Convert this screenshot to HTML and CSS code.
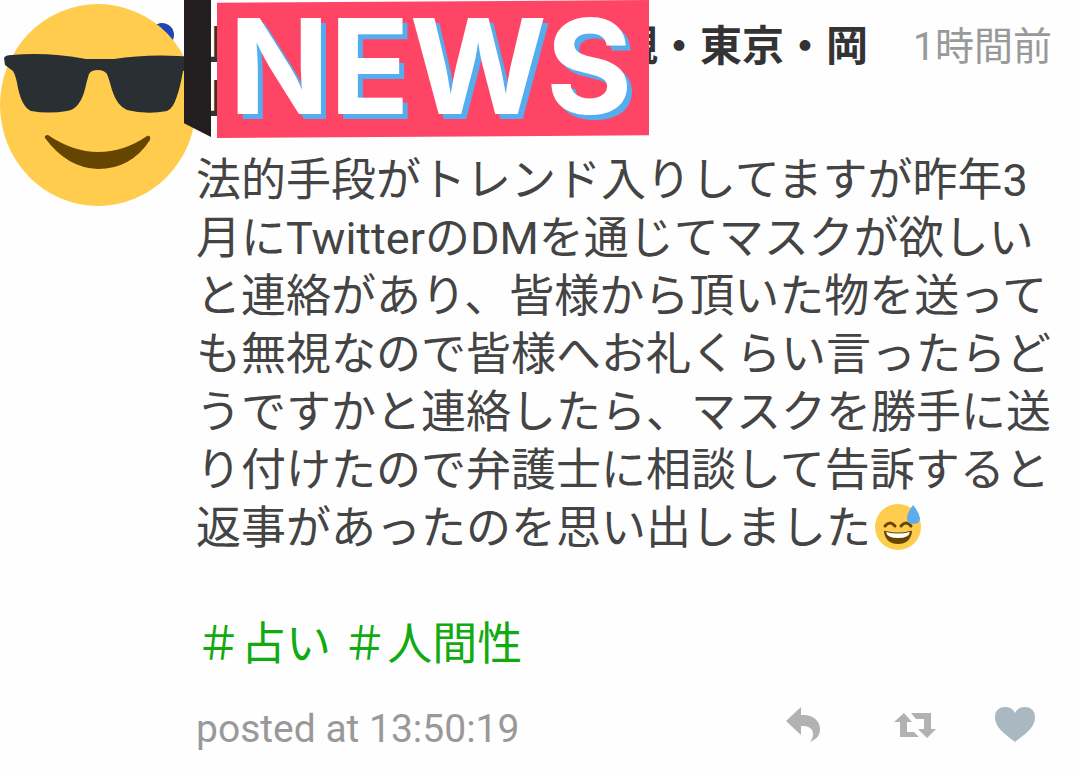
FILE: index.html
```html
<!DOCTYPE html>
<html lang="ja">
<head>
    <meta charset="UTF-8">
    <meta name="viewport" content="width=device-width, initial-scale=1">
    <title>NEWS</title>
    <link rel="stylesheet" href="styles.css">
</head>
<body>
    <article class="post">
        <div class="avatar">
            <svg viewBox="0 0 196 206" aria-hidden="true">
                <circle cx="162" cy="35" r="12" fill="#1f45b5"/>
                <ellipse cx="98" cy="105" rx="98" ry="101" fill="#ffcc4d"/>
                <path d="M4 58Q5 55 12 55Q48 52 86 59H114Q150 53 196 57V67L183 71Q180 88 177 96Q173 109 167 111Q147 115 127 110Q117 106 112 90Q109 79 107 74Q104 70 98 70Q91 70 89 74Q87 80 85 89Q80 109 67 111Q49 114 31 111Q22 107 18 88Q16 76 13 71L5 65Z" fill="#292f33"/>
                <path d="M45 138Q44 135 48 135Q73 152 98 152Q124 152 147 136Q151 135 150 140Q131 169 98 169Q67 168 45 138Z" fill="#664500"/>
            </svg>
        </div>

        <div class="content">
            <header class="post-header">
                <h1 class="name">山<span class="covered"></span>観・東京・岡山</h1>
                <time class="time">1時間前</time>
            </header>

            <p class="text">法的手段がトレンド入りしてますが昨年3月にTwitterのDMを通じてマスクが欲しいと連絡があり、皆様から頂いた物を送っても無視なので皆様へお礼くらい言ったらどうですかと連絡したら、マスクを勝手に送り付けたので弁護士に相談して告訴すると返事があったのを思い出しました<svg class="emoji" viewBox="0 0 46 46" role="img" aria-label="汗">
                <circle cx="23" cy="23" r="23" fill="#ffcc4d"/>
                <path d="M10 22Q15 16 20 22M26 22Q31 16 36 22" fill="none" stroke="#664500" stroke-width="3" stroke-linecap="round"/>
                <path d="M9 28Q9 26 11 27Q23 30 35 27Q37 26 37 28Q35 40 23 40Q11 40 9 28Z" fill="#664500"/>
                <path d="M11 28Q23 31 35 28Q34 34 23 34Q12 34 11 28Z" fill="#fff"/>
                <path d="M38 1Q32 9 32 14Q32 20 38 20Q45 20 45 14Q44 8 38 1Z" fill="#5dadec"/>
            </svg></p>

            <p class="tags"><a href="#uranai">＃占い</a> <a href="#ningensei">＃人間性</a></p>

            <footer class="post-footer">
                <span class="posted">posted at 13:50:19</span>
                <div class="actions">
                    <button class="action" type="button" aria-label="返信">
                        <svg width="52" height="42" viewBox="1 0 52 42">
                            <path d="M3 19L18 5V13C29 12 37 18 37 27C37 33 34 37 27 40C32 34 32 23 18 24V33Z" fill="#b2b2b2"/>
                        </svg>
                    </button>
                    <button class="action" type="button" aria-label="リツイート">
                        <svg width="42" height="42" viewBox="0 0 42 42">
                            <path d="M0 20L10 11L18 20H13V30H20L25 35H6V20ZM17 11H37V27H42L33 36L24 27H30V17H22Z" fill="#b2b2b2"/>
                        </svg>
                    </button>
                    <button class="action" type="button" aria-label="いいね">
                        <svg width="42" height="42" viewBox="0 0 42 42">
                            <path d="M21 40C14 34 1 27 1 15C1 8 6 5 11 5C16 5 19 7 21 11C23 7 26 5 31 5C36 5 41 8 41 15C41 27 28 34 21 40Z" fill="#aab8c2"/>
                        </svg>
                    </button>
                </div>
            </footer>
        </div>

        <div class="ribbon"></div>
        <div class="banner">NEWS</div>
    </article>
</body>
</html>
```
FILE: styles.css
```css
:root {
    --text: #444;
    --name: #333;
    --muted: #999;
    --tag: #11aa11;
    --banner: #ff4565;
    --banner-shadow: #55acee;
}

body {
    margin: 0;
    background: #fefefe;
    color: var(--text);
    font-family: Roboto, "Noto Sans CJK JP", sans-serif;
}

.post {
    position: relative;
    display: flex;
    align-items: flex-start;
}

.avatar {
    flex: 0 0 196px;
}

.avatar svg {
    display: block;
    width: 100%;
}

.content {
    flex: 1;
    min-width: 0;
    padding: 20px 28px 16px 0;
}

.post-header {
    display: flex;
    justify-content: space-between;
    align-items: flex-start;
    gap: 32px;
}

.name {
    margin: 0;
    flex: 1;
    color: var(--name);
    font-size: 42px;
    font-weight: bold;
    line-height: 54px;
}

/* part of the name hidden by the banner */
.covered {
    display: inline-block;
    width: 9em;
}

.time {
    color: var(--muted);
    font-size: 39px;
    line-height: 54px;
    white-space: nowrap;
}

.text {
    margin: 24px 0 0;
    font-size: 45px;
    line-height: 58px;
}

.emoji {
    width: 46px;
    height: 46px;
    margin-left: 4px;
    vertical-align: -6px;
}

.tags {
    margin: 58px 0 0;
    font-size: 45px;
    line-height: 58px;
}

.tags a {
    color: var(--tag);
    text-decoration: none;
}

.post-footer {
    display: flex;
    justify-content: space-between;
    align-items: flex-start;
    margin-top: 28px;
    padding-right: 16px;
}

.posted {
    color: var(--muted);
    font-size: 39px;
    line-height: 54px;
}

.actions {
    display: flex;
    gap: 58px;
}

.action {
    padding: 0;
    border: none;
    background: none;
    cursor: pointer;
}

.action svg {
    display: block;
}

/* news label laid over the avatar and the name */
.ribbon {
    position: absolute;
    top: 0;
    left: 184px;
    width: 27px;
    height: 137px;
    background: #231f20;
    clip-path: polygon(0 0, 100% 0, 100% 100%, 0 90%);
}

.banner {
    position: absolute;
    top: 0;
    left: 217px;
    box-sizing: border-box;
    width: 432px;
    height: 138px;
    padding-left: 12px;
    background: var(--banner);
    clip-path: polygon(0 2%, 100% 0, 100% 98%, 0 100%);
    color: #fff;
    font-family: Inter, sans-serif;
    font-size: 132px;
    font-weight: bold;
    line-height: 132px;
    text-shadow: 5px 5px 0 var(--banner-shadow);
}
```
